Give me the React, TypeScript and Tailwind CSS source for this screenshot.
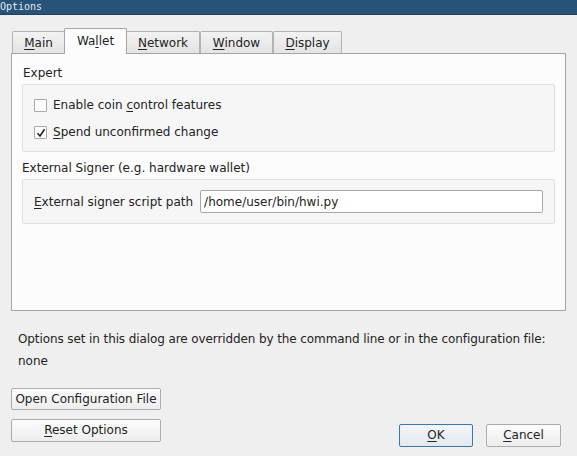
const tabs = [
  { pre: '', key: 'M', post: 'ain', w: 'w-[53px]' },
  { pre: 'Wa', key: 'l', post: 'let', w: 'w-[63px]', selected: true },
  { pre: '', key: 'N', post: 'etwork', w: 'w-[74px]' },
  { pre: '', key: 'W', post: 'indow', w: 'w-[73px]' },
  { pre: '', key: 'D', post: 'isplay', w: 'w-[69px]' },
];

function Mnemonic({ pre, k, post }: { pre: string; k: string; post: string }) {
  return (
    <span>
      {pre}
      <span className="underline underline-offset-[2px]">{k}</span>
      {post}
    </span>
  );
}

function Checkbox({ checked }: { checked?: boolean }) {
  return (
    <span className="grid h-[13px] w-[13px] place-items-center rounded-[1px] border border-[#a9a9a9] bg-white">
      {checked && (
        <svg width="10" height="10" viewBox="0 0 10 10">
          <path d="M1.5 5.2 L4 8 L8.6 1.2" fill="none" stroke="#1e1e1e" strokeWidth="1.6" />
        </svg>
      )}
    </span>
  );
}

function Button({ children, className, primary }: { children: React.ReactNode; className?: string; primary?: boolean }) {
  return (
    <button
      className={
        'flex items-center justify-center rounded-[2px] border leading-[15px] ' +
        (primary
          ? 'border-[#3b78ad] bg-gradient-to-b from-[#f3f6f9] to-[#e3e9ef] '
          : 'border-[#ababab] bg-gradient-to-b from-[#fcfcfc] to-[#ededed] ') +
        (className ?? '')
      }
    >
      {children}
    </button>
  );
}

export default function App() {
  return (
    <div className="flex h-[456px] w-[577px] flex-col overflow-hidden bg-[#efefef] font-['DejaVu_Sans',sans-serif] text-[12px] text-[#232323]">
      <div className="h-[15px] border-b border-[#1d3f60] bg-[#285379] font-['DejaVu_Sans_Mono',monospace] text-[10px] leading-[14px] text-[#e4eaf0]">
        Options
      </div>

      <div className="mt-[13px] flex h-[25px] items-end pl-[12px]">
        {tabs.map((t) =>
          t.selected ? (
            <div
              key={t.key}
              className={`relative z-10 -mx-[1px] -mb-[1px] flex h-[26px] items-center justify-center rounded-t-[2px] border border-b-0 border-[#a5a5a5] bg-[#fcfcfc] pb-[2px] ${t.w}`}
            >
              <Mnemonic pre={t.pre} k={t.key} post={t.post} />
            </div>
          ) : (
            <div
              key={t.key}
              className={`flex h-[22px] items-center justify-center rounded-t-[2px] border border-b-0 border-[#b3b3b3] bg-gradient-to-b from-[#f2f2f2] to-[#e4e4e4] pt-[1px] ${t.w}`}
            >
              <Mnemonic pre={t.pre} k={t.key} post={t.post} />
            </div>
          ),
        )}
      </div>

      <div className="ml-[11px] flex h-[258px] w-[555px] flex-col border border-[#a5a5a5] bg-[#fcfcfc] pl-[10px] pr-[10px] pt-[12px]">
        <div className="pl-[1px] leading-[15px]">Expert</div>
        <div className="mt-[3px] flex h-[68px] flex-col rounded-[2px] border border-[#dedede] bg-[#f6f6f6] pl-[11px] pt-[13px]">
          <label className="flex h-[15px] items-center gap-[6px] leading-[15px]">
            <Checkbox />
            <span>
              Enable coin <span className="underline underline-offset-[2px]">c</span>ontrol features
            </span>
          </label>
          <label className="mt-[12px] flex h-[15px] items-center gap-[6px] leading-[15px]">
            <Checkbox checked />
            <Mnemonic pre="" k="S" post="pend unconfirmed change" />
          </label>
        </div>

        <div className="mt-[9px] leading-[15px]">External Signer (e.g. hardware wallet)</div>
        <div className="mt-[3px] flex h-[45px] items-center rounded-[2px] border border-[#dedede] bg-[#f6f6f6] pl-[11px] pr-[11px]">
          <Mnemonic pre="" k="E" post="xternal signer script path" />
          <div className="ml-[7px] flex h-[23px] flex-1 items-center rounded-[2px] border border-[#a8a8a8] bg-white pl-[3px]">
            /home/user/bin/hwi.py
          </div>
        </div>
      </div>

      <div className="mt-[17px] pl-[18px] leading-[22px]">
        <div className="tracking-[-0.1px]">
          Options set in this dialog are overridden by the command line or in the configuration file:
        </div>
        <div>none</div>
      </div>

      <div className="mt-[16px] flex items-start px-[11px]">
        <div className="flex flex-col gap-[9px]">
          <Button className="h-[22px] w-[150px]">Open Configuration File</Button>
          <Button className="h-[23px] w-[150px]">
            <Mnemonic pre="" k="R" post="eset Options" />
          </Button>
        </div>
        <div className="ml-auto mr-[5px] mt-[36px] flex gap-[13px]">
          <Button primary className="h-[23px] w-[74px]">
            <Mnemonic pre="" k="O" post="K" />
          </Button>
          <Button className="h-[23px] w-[75px]">
            <Mnemonic pre="" k="C" post="ancel" />
          </Button>
        </div>
      </div>
    </div>
  );
}
